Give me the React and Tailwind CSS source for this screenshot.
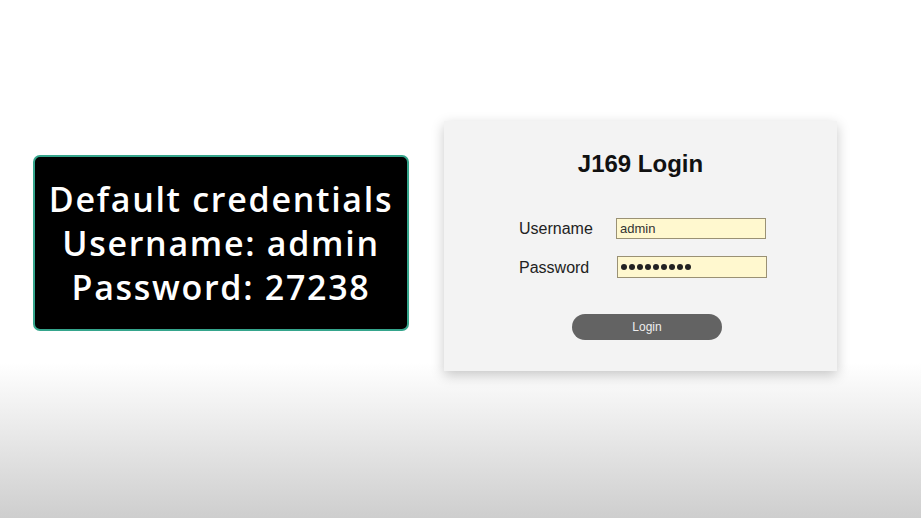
import React from "react";

function CredentialsBox() {
  return (
    <div className="mt-[155px] flex h-[176px] w-[376px] flex-col items-center justify-center rounded-[7px] border-2 border-[#35a58c] bg-black font-['Open_Sans',sans-serif] text-[34px] font-semibold leading-[44px] tracking-[1.7px] text-white">
      <p>Default credentials</p>
      <p>Username: admin</p>
      <p>Password: 27238</p>
    </div>
  );
}

function LoginCard() {
  const dots = Array.from({ length: 9 });
  return (
    <div className="mt-[121px] h-[250px] w-[393px] bg-[#f3f3f3] pt-[29px] font-['Liberation_Sans',Arial,sans-serif] shadow-[0_4px_12px_rgba(0,0,0,0.22)]">
      <h1 className="text-center text-[24px] font-bold leading-[28px] text-[#111]">J169 Login</h1>
      <div className="mt-[40px] flex flex-col gap-[17px] pl-[75px]">
        <div className="flex items-center">
          <span className="w-[97px] text-[16px] leading-[21px] text-[#222]">Username</span>
          <div className="flex h-[21px] w-[150px] items-center border border-[#9a9174] bg-[#fff8cf] px-[3px] text-[13px] text-[#333]">
            admin
          </div>
        </div>
        <div className="flex items-center">
          <span className="w-[98px] text-[16px] leading-[21px] text-[#222]">Password</span>
          <div className="flex h-[22px] w-[150px] items-center gap-[2px] border border-[#9a9174] bg-[#fff8cf] px-[3px]">
            {dots.map((_, i) => (
              <span key={i} className="h-[6px] w-[6px] rounded-full bg-[#222]" />
            ))}
          </div>
        </div>
      </div>
      <button
        type="button"
        className="ml-[128px] mt-[36px] flex h-[26px] w-[150px] items-center justify-center rounded-full bg-[#636363] text-[12px] text-[#eeeeee]"
      >
        Login
      </button>
    </div>
  );
}

export default function App() {
  return (
    <div className="flex h-[518px] w-full items-start gap-[35px] bg-[linear-gradient(to_bottom,#ffffff_0%,#ffffff_70%,#cecece_100%)] pl-[33px]">
      <CredentialsBox />
      <LoginCard />
    </div>
  );
}
